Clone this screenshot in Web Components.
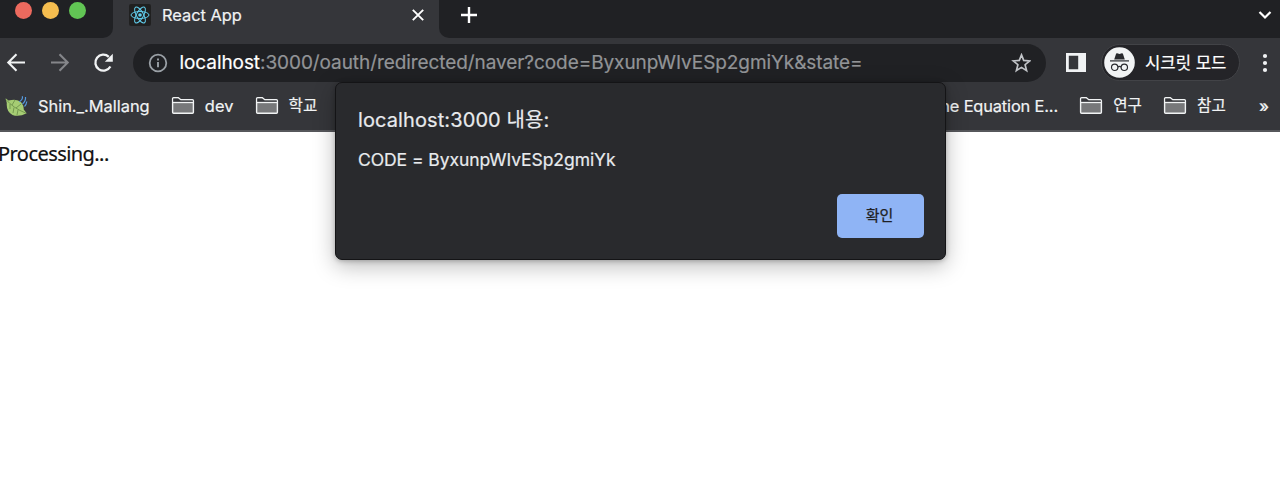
<!DOCTYPE html>
<html lang="ko">
<head>
<meta charset="utf-8">
<title>React App</title>
<style>
html,body{margin:0;height:100%;overflow:hidden;background:#fff}
body{font-family:Inter,"Noto Sans CJK KR",sans-serif}
</style>
</head>
<body>
<browser-window>
  <tab-strip slot="tabs">React App</tab-strip>
  <tool-bar slot="toolbar"></tool-bar>
  <bookmarks-bar slot="bookmarks"></bookmarks-bar>
  <page-content>Processing...</page-content>
  <alert-dialog slot="dialog">
    <span slot="title">localhost:3000 내용:</span>
    <span slot="message">CODE = ByxunpWIvESp2gmiYk</span>
    <span slot="action">확인</span>
  </alert-dialog>
</browser-window>
<script>
const define=(name,html)=>customElements.define(name,class extends HTMLElement{
  constructor(){super();this.attachShadow({mode:'open'}).innerHTML=html;}
});

define('browser-window',`<style>
:host{display:flex;flex-direction:column;position:relative;width:1280px;height:488px;overflow:hidden;background:#fff;-webkit-text-stroke:.2px currentColor}
slot[name=dialog]::slotted(*){position:absolute;left:335px;top:82px}
</style><slot name="tabs"></slot><slot name="toolbar"></slot><slot name="bookmarks"></slot><slot></slot><slot name="dialog"></slot>`);

define('tab-strip',`<style>
:host{display:flex;height:38px;background:#35363a;color:#f1f3f4;flex:none}
.lights{display:flex;box-sizing:border-box;width:113px;height:38px;gap:10.2px;padding:2px 0 0 14.6px;background:#202124;border-radius:0 0 10px 0}
i{width:17px;height:17px;border-radius:50%}
.tab{display:flex;box-sizing:border-box;width:326px;padding:0 14.500px 8px 16px;align-items:center}
.title{font-size:16.4px;line-height:20px;margin-left:11px;flex:1;letter-spacing:-.02px}
.rest{flex:1;display:flex;align-items:center;justify-content:space-between;background:#202124;border-radius:0 0 0 10px;padding:0 8px 8px 21px}
svg{display:block;fill:none;stroke:#fff}
</style>
<div class="lights"><i style="background:#ed6a5e"></i><i style="background:#f5bd4f"></i><i style="background:#61c554"></i></div>
<div class="tab">
<svg width="22" height="22" viewBox="0 0 22 22"><rect width="22" height="22" rx="2" fill="#202020" stroke="none"/><g stroke="#61cdec" stroke-width="1"><ellipse cx="11" cy="11" rx="9" ry="3.5"/><ellipse cx="11" cy="11" rx="9" ry="3.5" transform="rotate(60 11 11)"/><ellipse cx="11" cy="11" rx="9" ry="3.5" transform="rotate(120 11 11)"/></g><circle cx="11" cy="11" r="1.8" fill="#61cdec" stroke="none"/></svg>
<span class="title"><slot></slot></span>
<svg width="14" height="14" viewBox="0 0 14 14" stroke-width="1.9"><path d="M1.8 1.8 12.2 12.2M12.2 1.8 1.8 12.2"/></svg>
</div>
<div class="rest">
<svg width="18" height="18" viewBox="0 0 18 18" stroke-width="2.4"><path d="M9 1v16M1 9h16"/></svg>
<svg width="14" height="10" viewBox="0 0 14 10" stroke-width="2.2"><path d="M1.5 2 7 7.5 12.5 2"/></svg>
</div>`);

define('tool-bar',`<style>
:host{display:flex;align-items:center;height:49px;background:#35363a;color:#fff;flex:none;box-sizing:border-box;padding-left:6px}
svg{display:block;fill:none;flex:none}
.nav{display:flex;gap:22px;align-items:center;width:127px}
.omni{display:flex;align-items:center;box-sizing:border-box;width:913px;height:38px;border-radius:19px;background:#202124;padding:0 15px}
.url{flex:1;margin-left:11.5px;font-size:19px;line-height:24px;white-space:nowrap;color:#929497;letter-spacing:-.075px}
b{font-weight:400;color:#fff}
.panel{margin-left:20px}
.mode{display:flex;align-items:center;box-sizing:border-box;width:139px;height:37px;border:1.5px solid #424347;border-radius:19px;background:#242428;margin-left:15px;padding-left:2px}
.mode span{font-size:16.700px;line-height:22px;margin-left:10px;white-space:nowrap}
.dots{margin-left:22px}
</style>
<div class="nav">
<svg width="20" height="20" viewBox="0 0 20 20" stroke="#f1f3f4" stroke-width="2.1"><path d="M19 9.500H2.500M10.500 1.300 2.300 9.500l8.200 8.200"/></svg>
<svg width="20" height="20" viewBox="0 0 20 20" stroke="#85868a" stroke-width="2.1" style="margin-left:2px"><path d="M1 9.500h16.500M9.500 1.300 17.700 9.500l-8.200 8.200"/></svg>
<svg width="22" height="22" viewBox="0 0 22 22"><path d="M18.400 14.500A8 8 0 1 1 16.800 4.800" stroke="#f1f3f4" stroke-width="2.300"/><path d="M20.800 1.700v8h-8z" fill="#f1f3f4"/></svg>
</div>
<div class="omni">
<svg width="20" height="20" viewBox="0 0 20 20"><circle cx="10" cy="10" r="8.300" stroke="#9aa0a6" stroke-width="1.800"/><path d="M10 9v5.300M10 5.600v2" stroke="#9aa0a6" stroke-width="1.900"/></svg>
<span class="url"><b>localhost</b>:3000/oauth/redirected/naver?code=ByxunpWIvESp2gmiYk&amp;state=</span>
<svg width="20" height="20" viewBox="0 0 20 20"><path d="M10.500 1.900 12.700 7.400 18.700 7.900 14.100 11.700 15.600 17.600 10.500 14.400 5.400 17.600 6.900 11.700 2.300 7.900 8.300 7.400Z" stroke="#c1c4c8" stroke-width="1.700"/></svg>
</div>
<svg class="panel" width="20" height="20" viewBox="0 0 20 20"><path fill="#f1f3f4" fill-rule="evenodd" d="M0 0h20v19H0zM2.800 2.800v13.400h9.400V2.800z"/></svg>
<div class="mode">
<svg width="31" height="31" viewBox="0 0 31 31"><circle cx="15.500" cy="15.500" r="15.300" fill="#f1f3f4"/><path d="M10.200 12.500 12 6.900q.3-.9 1.200-.6l2.300.7 2.300-.7q.9-.3 1.200.6l1.800 5.600z" fill="#28292d"/><path d="M6 13.900h19" stroke="#28292d" stroke-width="1.200"/><g stroke="#28292d" stroke-width="1.200"><circle cx="10.700" cy="20.300" r="3.200"/><circle cx="20.300" cy="20.300" r="3.200"/><path d="M13.900 20q1.600-1.300 3.200 0"/></g></svg>
<span>시크릿 모드</span></div>
<svg class="dots" width="6" height="20" viewBox="0 0 6 20"><g fill="#f1f3f4"><circle cx="3" cy="3" r="2.100"/><circle cx="3" cy="10" r="2.100"/><circle cx="3" cy="17" r="2.100"/></g></svg>`);

define('bookmark-folder',`<style>
:host{display:flex;align-items:center;gap:10px;white-space:nowrap}
:host([korean]){font-size:15.600px}
svg{display:block}
</style><svg width="24" height="19" viewBox="0 0 24 19"><path d="M1.600 16.200V2.700Q1.600 1.700 2.600 1.700H7.300L9.800 3.800H21.400Q22.400 3.800 22.400 4.800V16.200Q22.400 17.200 21.400 17.200H2.600Q1.600 17.200 1.600 16.200Z" fill="#77787a" stroke="#f1f3f4" stroke-width="1.400"/><path d="M2.300 2.400h4.800l2.500 2.100h12.100v1.700H2.300z" fill="#35363a"/><path d="M2 6.500h20" stroke="#f1f3f4" stroke-width="1.300"/></svg><slot></slot>`);

define('bookmarks-bar',`<style>
:host{display:flex;justify-content:space-between;align-items:center;box-sizing:border-box;height:45px;background:#35363a;border-bottom:2px solid #56575b;flex:none;padding:0 11px 6px 5px;color:#f1f3f4;font-size:16.400px;line-height:22px;white-space:nowrap}
.group{display:flex;align-items:center;gap:21.200px}
.leaf{display:flex;align-items:center;gap:10px}
.long{letter-spacing:-.150px}
svg{display:block}
.more{font-size:16.500px;font-weight:500;margin-left:12px}
</style>
<div class="group">
<span class="leaf"><svg width="23" height="22" viewBox="0 0 23 22"><path d="M.6 3.300 3.500 5.600Q12 3 16.300 7.500 19 11 18.700 14.500L21.700 18.300Q14 22.300 7.500 20 1 16.500 1.800 8Z" fill="#a5cc73"/><path d="M1 4.500Q8 13 21 18.200M5 9v5M9 12.500l-1 5.500M13 15l-1 5M7 10l3-5M11 13l5-4" fill="none" stroke="#74994f" stroke-width="1"/><path d="M17.300 1.300q1 3-3 5.500M20.500 2q.5 4-3 7M21.800 6.500q-.5 3.500-2.300 5" fill="none" stroke="#559adf" stroke-width="1.200"/></svg>Shin._.Mallang</span>
<bookmark-folder>dev</bookmark-folder><bookmark-folder korean>학교</bookmark-folder></div>
<div class="group"><span class="long">The Equation E...</span><bookmark-folder korean>연구</bookmark-folder><bookmark-folder korean>참고</bookmark-folder><span class="more">»</span></div>`);

define('page-content',`<style>
:host{display:block;flex:1;background:#fff;color:#111;font:20px/26px "Noto Sans",sans-serif;padding-top:9px;text-indent:-2px;letter-spacing:-.560px}
</style><slot></slot>`);

define('alert-dialog',`<style>
:host{display:flex;flex-direction:column;box-sizing:border-box;width:611px;height:178px;border:1px solid #141416;border-radius:7px;background:#292a2d;color:#e8eaed;padding:23px 21px 21px 22px;box-shadow:0 6px 22px rgba(0,0,0,.27),0 1px 5px rgba(0,0,0,.25)}
.title{font-size:20px;line-height:28px;letter-spacing:.100px}
.msg{font-size:17.500px;line-height:24px;margin-top:14px;letter-spacing:-.060px}
button{font:400 15px/20px Inter,"Noto Sans CJK KR",sans-serif;color:#202124;background:#8fb4f5;border:0;border-radius:5px;width:87px;height:44px;align-self:flex-end;margin-top:auto;padding:0 2px 0 0;-webkit-text-stroke:.25px currentColor}
</style><div class="title"><slot name="title"></slot></div><div class="msg"><slot name="message"></slot></div><button><slot name="action"></slot></button>`);
</script>
</body>
</html>
